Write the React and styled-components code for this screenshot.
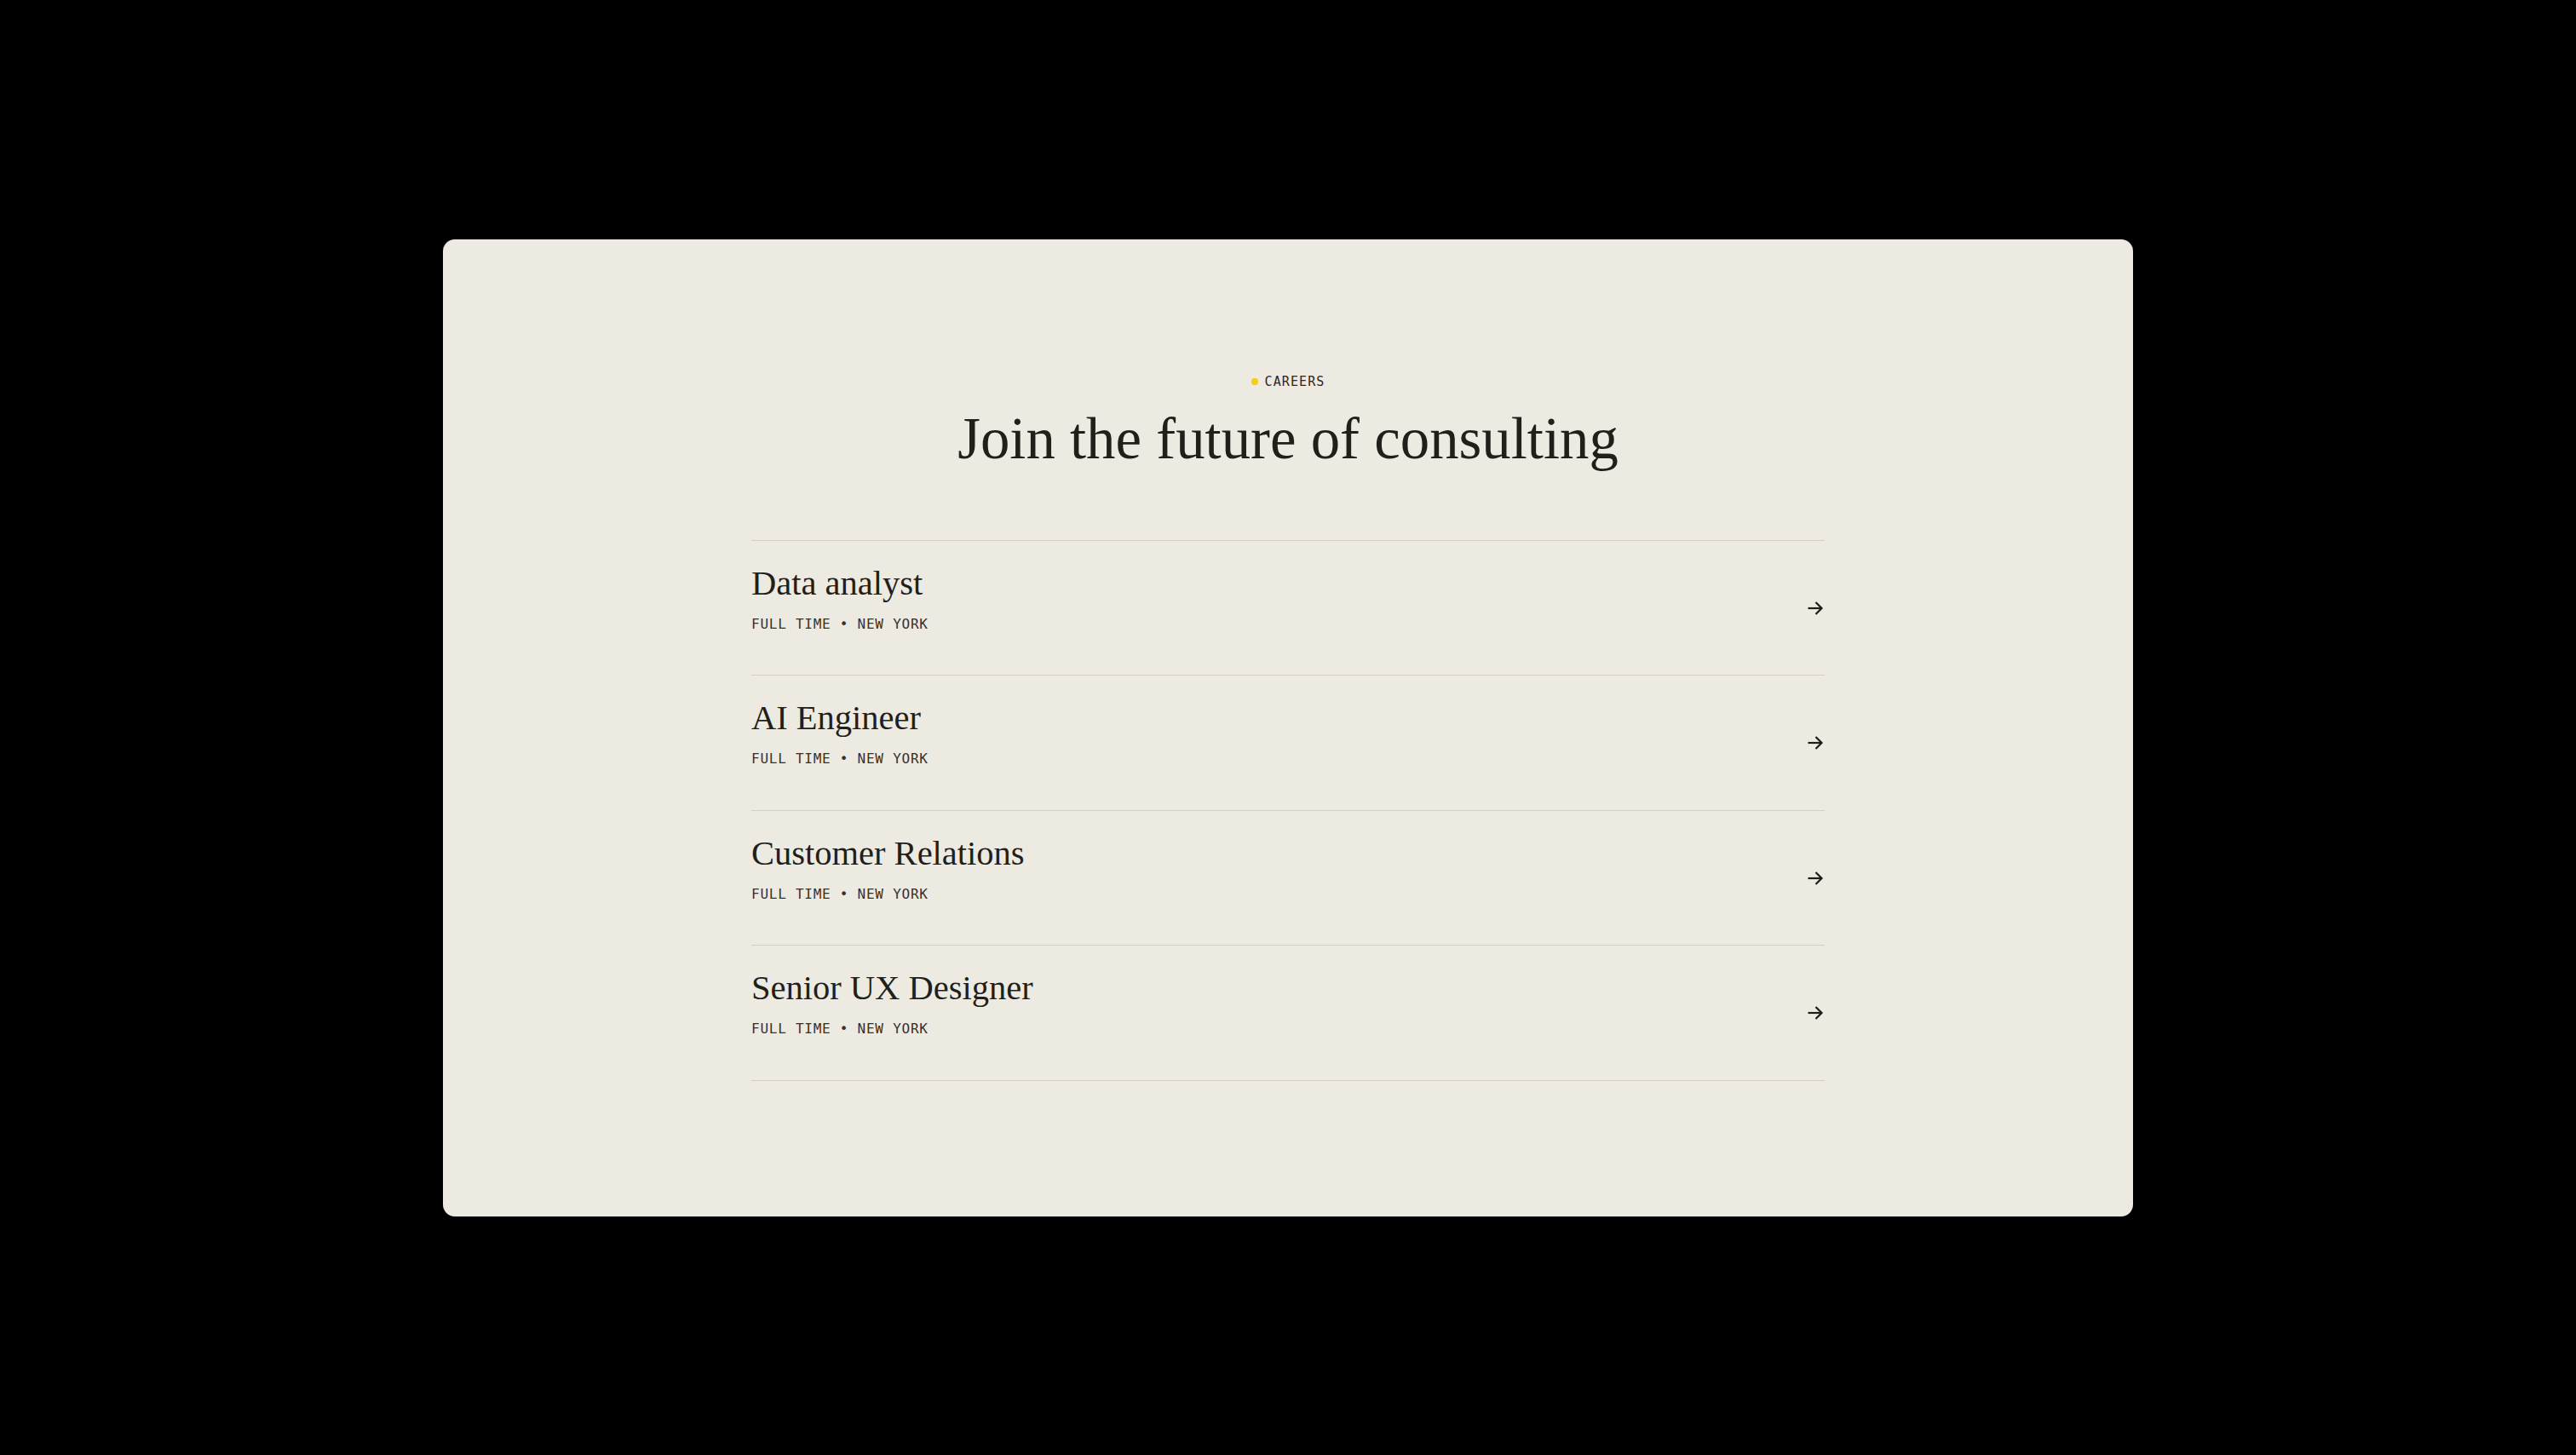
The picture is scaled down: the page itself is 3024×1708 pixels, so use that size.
import React from "react";
import styled, { createGlobalStyle } from "styled-components";

const GlobalStyle = createGlobalStyle`
  html, body {
    margin: 0;
    padding: 0;
    background: #000;
  }
  body {
    font-family: "Liberation Serif", serif;
  }
`;

const Page = styled.main`
  min-height: 100vh;
  display: flex;
  align-items: center;
  justify-content: center;
  background: #000;
`;

const Card = styled.section`
  width: 1984px;
  box-sizing: border-box;
  padding: 157px 0 159px;
  background: #edeae2;
  border-radius: 14px;
  display: flex;
  flex-direction: column;
  align-items: center;
`;

const Eyebrow = styled.div`
  display: flex;
  align-items: center;
  gap: 8px;
  height: 20px;
  font-family: "DejaVu Sans Mono", "Liberation Mono", monospace;
  font-size: 15px;
  line-height: 20px;
  letter-spacing: 1.1px;
  color: #2b2824;
`;

const Dot = styled.span`
  width: 8px;
  height: 8px;
  border-radius: 50%;
  background: #f7cd0f;
`;

const Heading = styled.h1`
  margin: 16px 0 0;
  font-family: "Liberation Serif", serif;
  font-weight: 400;
  font-size: 68.8px;
  line-height: 82px;
  color: #221f1b;
`;

const List = styled.ul`
  list-style: none;
  margin: 78px 0 0;
  padding: 0;
  width: 1260px;
  border-bottom: 1px solid #d4d0c8;
`;

const Row = styled.li`
  display: flex;
  align-items: center;
  justify-content: space-between;
  padding: 26px 0 25.5px;
  border-top: 1px solid #d4d0c8;
  cursor: pointer;
`;

const Info = styled.div`
  display: flex;
  flex-direction: column;
  gap: 14px;
  padding-bottom: 24px;
`;

const Title = styled.div`
  font-family: "Liberation Serif", serif;
  font-size: 40.5px;
  line-height: 48px;
  color: #221f1b;
`;

const Meta = styled.div`
  font-family: "DejaVu Sans Mono", "Liberation Mono", monospace;
  font-size: 16px;
  line-height: 20px;
  letter-spacing: 0.75px;
  color: #35322d;
`;

const Arrow = styled.svg`
  width: 20px;
  height: 20px;
  margin-right: 1px;
  flex-shrink: 0;
`;

const jobs = [
  { title: "Data analyst", meta: "FULL TIME • NEW YORK" },
  { title: "AI Engineer", meta: "FULL TIME • NEW YORK" },
  { title: "Customer Relations", meta: "FULL TIME • NEW YORK" },
  { title: "Senior UX Designer", meta: "FULL TIME • NEW YORK" },
];

const ArrowIcon = () => (
  <Arrow viewBox="0 0 20 20" fill="none" stroke="#1f1c18" strokeWidth="2.2">
    <path d="M1.5 10h16" />
    <path d="M10.5 3l7 7-7 7" strokeLinejoin="miter" />
  </Arrow>
);

export default function App() {
  return (
    <>
      <GlobalStyle />
      <Page>
        <Card>
          <Eyebrow>
            <Dot />
            CAREERS
          </Eyebrow>
          <Heading>Join the future of consulting</Heading>
          <List>
            {jobs.map((job) => (
              <Row key={job.title}>
                <Info>
                  <Title>{job.title}</Title>
                  <Meta>{job.meta}</Meta>
                </Info>
                <ArrowIcon />
              </Row>
            ))}
          </List>
        </Card>
      </Page>
    </>
  );
}
